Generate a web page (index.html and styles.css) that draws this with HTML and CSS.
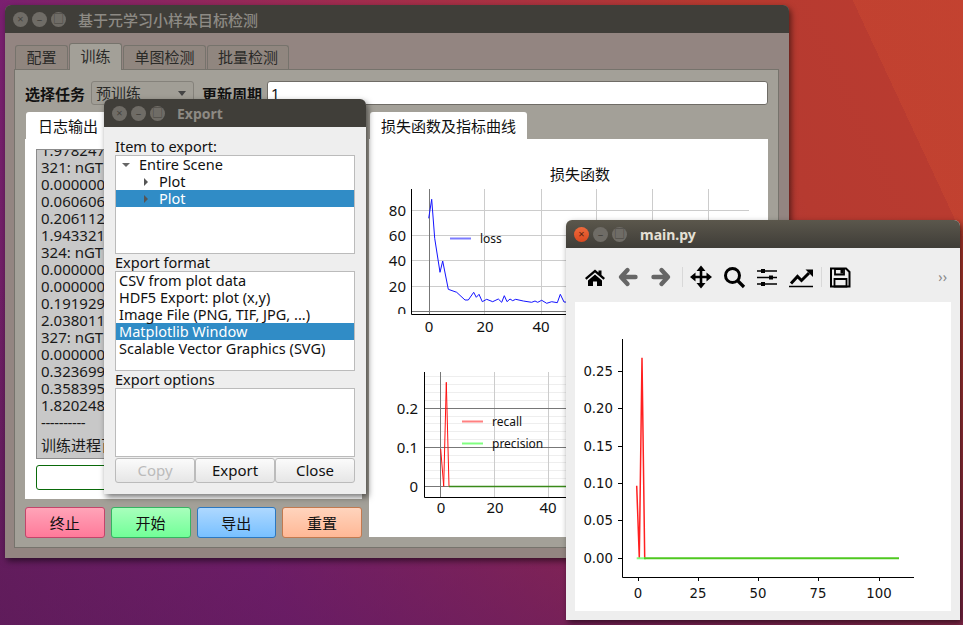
FILE: index.html
```html
<!DOCTYPE html>
<html>
<head>
	<meta charset="utf-8">
	<title>基于元学习小样本目标检测</title>
	<link rel="stylesheet" href="styles.css">
</head>
<body>
	<div class="window win-main">
		<div class="titlebar">
			<span class="wbtn">×</span><span class="wbtn">–</span><span class="wbtn">□</span>
			<span class="wtitle">基于元学习小样本目标检测</span>
		</div>
		<div class="main-body">
			<div class="tabs">
				<span class="tab tab-1">配置</span>
				<span class="tab tab-2 active">训练</span>
				<span class="tab tab-3">单图检测</span>
				<span class="tab tab-4">批量检测</span>
			</div>
			<div class="pane">
				<div class="top-row">
					<b class="lbl">选择任务</b>
					<div class="combo">预训练<i class="combo-arrow"></i></div>
					<b class="lbl lbl-2">更新周期</b>
					<div class="lineedit">1</div>
				</div>
				<div class="columns">
					<div class="col-left">
						<div class="subtab">日志输出</div>
						<div class="log-pane">
							<div class="log">
								<div>1.978247</div>
								<div>321: nGT</div>
								<div>0.000000</div>
								<div>0.060606</div>
								<div>0.206112</div>
								<div>1.943321</div>
								<div>324: nGT</div>
								<div>0.000000</div>
								<div>0.000000</div>
								<div>0.191929</div>
								<div>2.038011</div>
								<div>327: nGT</div>
								<div>0.000000</div>
								<div>0.323699</div>
								<div>0.358395</div>
								<div>1.820248</div>
								<div class="log-dash">----------</div>
								<div class="log-last">训练进程百分比</div>
							</div>
							<div class="progress"></div>
						</div>
						<div class="actions">
							<button class="act act-stop">终止</button>
							<button class="act act-start">开始</button>
							<button class="act act-export">导出</button>
							<button class="act act-reset">重置</button>
						</div>
					</div>
					<div class="col-right">
						<div class="subtab subtab-wide">损失函数及指标曲线</div>
						<div class="chart-pane">
							<svg class="charts" width="399" height="397" viewBox="369 139 399 397">
								<defs>
									<clipPath id="clip1"><rect x="380" y="185" width="380" height="129"/></clipPath>
								</defs>
								<text class="cjk" x="580" y="180" text-anchor="middle">损失函数</text>
								<g stroke="#ccc" stroke-width="1">
									<path d="M412 210.5H749M412 235.5H749M412 260.5H749M412 286.5H749"/>
									<path d="M484.5 189V314M541.5 189V314M596.5 189V314M652.5 189V314M708.5 189V314"/>
								</g>
								<path d="M412 311.5H749M429.5 189V314" stroke="#777" fill="none"/>
								<path d="M411.5 189V314.5H749" stroke="#000" fill="none" stroke-width="1"/>
								<polyline fill="none" stroke="#1414ff" stroke-width="1" points="428.7,218.3 431.7,199.3 434.7,238.3 440,272.3 442.7,261 448.3,289.3 456.7,292.3 465,300 468.3,300 473.7,292.3 476.3,297.3 479,294.3 482.3,301.7 486.7,299.3 492.7,301.7 498.3,299 501.7,302.3 504.3,295.7 507,301.7 510,299 512.7,300.7 515.7,299.3 523.3,301 531.7,302.3 535,301 537.7,302.3 541.7,300.3 546.7,303.3 551.7,301.7 557.3,302.7 560.3,294.3 564,302 590,303 620,302 680,303 745,302"/>
								<path d="M450 238.5H471" stroke="#7c7cff" stroke-width="2"/>
								<text class="legend" x="480" y="243">loss</text>
								<g class="tick" text-anchor="end" clip-path="url(#clip1)">
									<text x="406" y="216">80</text>
									<text x="406" y="241">60</text>
									<text x="406" y="266">40</text>
									<text x="406" y="292">20</text>
									<text x="406" y="317">0</text>
								</g>
								<g class="tick" text-anchor="middle">
									<text x="429" y="332">0</text>
									<text x="485" y="332">20</text>
									<text x="541" y="332">40</text>
								</g>

								<g stroke="#eee">
									<path d="M425 376.500H566M425 384.500H566M425 392.500H566M425 400.500H566M425 416.500H566M425 423.500H566M425 431.500H566M425 439.500H566M425 455.500H566M425 462.500H566M425 470.500H566M425 478.500H566"/>
								</g>
								<path d="M494.500 372V497M548.500 372V497" stroke="#ccc"/>
								<path d="M425 408.500H566M425 447.500H566M425 486.500H566M440.500 372V497" stroke="#777" fill="none"/>
								<path d="M424.500 372V497.500H566" stroke="#000" fill="none"/>
								<polyline fill="none" stroke="#ff1010" points="440.700,449 443.700,486.300 446.300,382.300 449,486.300"/>
								<path d="M449 486.500H566" stroke="#3a8a1a" stroke-width="1.500"/>
								<path d="M462 421.500H483" stroke="#ff8080" stroke-width="2"/>
								<path d="M462 443.500H483" stroke="#80ff80" stroke-width="2"/>
								<text class="legend" x="492" y="426">recall</text>
								<text class="legend" x="492" y="448">precision</text>
								<g class="tick" text-anchor="end">
									<text x="418" y="414">0.2</text>
									<text x="418" y="453">0.1</text>
									<text x="418" y="492">0</text>
								</g>
								<g class="tick" text-anchor="middle">
									<text x="441" y="513">0</text>
									<text x="495" y="513">20</text>
									<text x="548" y="513">40</text>
								</g>
							</svg>
						</div>
					</div>
				</div>
			</div>
		</div>
	</div>

	<div class="window win-export">
		<div class="titlebar">
			<span class="wbtn">×</span><span class="wbtn">–</span><span class="wbtn">□</span>
			<span class="wtitle wtitle-bold">Export</span>
		</div>
		<div class="export-body">
			<div class="exp-label">Item to export:</div>
			<div class="box box-tree">
				<div class="row row-top"><i class="tri-down"></i>Entire Scene</div>
				<div class="row row-child"><i class="tri-right"></i>Plot</div>
				<div class="row row-child selected"><i class="tri-right"></i>Plot</div>
			</div>
			<div class="exp-label">Export format</div>
			<div class="box box-list">
				<div class="row">CSV from plot data</div>
				<div class="row">HDF5 Export: plot (x,y)</div>
				<div class="row">Image File (PNG, TIF, JPG, ...)</div>
				<div class="row selected">Matplotlib Window</div>
				<div class="row">Scalable Vector Graphics (SVG)</div>
			</div>
			<div class="exp-label">Export options</div>
			<div class="box box-options"></div>
			<div class="exp-buttons">
				<button class="exp-btn" disabled>Copy</button>
				<button class="exp-btn">Export</button>
				<button class="exp-btn">Close</button>
			</div>
		</div>
	</div>

	<div class="window win-plot">
		<div class="titlebar titlebar-focus">
			<span class="wbtn wbtn-close">×</span><span class="wbtn">–</span><span class="wbtn">□</span>
			<span class="wtitle wtitle-focus">main.py</span>
		</div>
		<div class="toolbar">
			<svg class="ico" width="24" height="24" viewBox="0 0 24 24"><path d="M12 4.500L2 13l1.500 1.700L12 7.500l8.500 7.200L22 13l-3.500-3V5.500h-3v2z"/><path d="M5 15.500L12 9.500l7 6V21h-5v-4.500h-4V21H5z"/></svg>
			<svg class="ico" width="24" height="24" viewBox="0 0 24 24"><path d="M19.500 12H6M11.500 5L5 12l6.500 7" fill="none" stroke="#666" stroke-width="4.400" stroke-linecap="round" stroke-linejoin="round"/></svg>
			<svg class="ico" width="24" height="24" viewBox="0 0 24 24"><path d="M4.500 12H18M12.500 5L19 12l-6.500 7" fill="none" stroke="#666" stroke-width="4.400" stroke-linecap="round" stroke-linejoin="round"/></svg>
			<span class="sep"></span>
			<svg class="ico" width="24" height="24" viewBox="0 0 24 24"><path d="M12 4V20M4 12H20" stroke="#000" stroke-width="2.600"/><path d="M12 0.500L16.500 6h-9zM12 23.500L7.500 18h9zM1 12L6.500 7.500v9zM23 12L17.500 16.500v-9z"/></svg>
			<svg class="ico" width="24" height="24" viewBox="0 0 24 24"><circle cx="10.500" cy="10.500" r="7" fill="none" stroke="#000" stroke-width="3"/><path d="M15.500 15.500L22 22" stroke="#000" stroke-width="3.200"/></svg>
			<svg class="ico" width="24" height="24" viewBox="0 0 24 24"><path d="M2 6H22M2 12.500H22M2 19H22" stroke="#000" stroke-width="1.500"/><path d="M6 4h4v4H6zM14 10.500h4v4h-4zM6 17h4v4H6z"/></svg>
			<svg class="ico" width="26" height="24" viewBox="0 0 26 24"><path d="M1 21.500H25" stroke="#000" stroke-width="1.500"/><path d="M3 18.500L9.500 11.500l4 4L21 8" fill="none" stroke="#000" stroke-width="3"/><path d="M17.500 4.500H25V12z"/></svg>
			<span class="sep sep-2"></span>
			<svg class="ico" width="24" height="24" viewBox="0 0 24 24"><path d="M3 3.500H18L21.500 7V21.500H3z" fill="none" stroke="#000" stroke-width="2"/><path d="M7 4h9v5.500H7zM6.500 14h12v7.500h-12z" fill="none" stroke="#000" stroke-width="1.800"/><path d="M12.500 5h2.500v3.500h-2.500z"/></svg>
			<span class="more">››</span>
		</div>
		<div class="canvas">
			<svg width="376" height="309" viewBox="575 302 376 309">
				<path d="M622.500 339V577.500H914" fill="none" stroke="#000" stroke-width="1"/>
				<path d="M638.500 577V581M698.500 577V581M758.500 577V581M818.500 577V581M879.500 577V581M622 371.500H618M622 408.500H618M622 446.500H618M622 483.500H618M622 520.500H618M622 558.500H618" stroke="#000"/>
				<polyline fill="none" stroke="#ff2020" stroke-width="1.500" points="636.700,485.700 639.300,558 642,357.700 644.700,558"/>
				<path d="M636.700 558.300H646" stroke="#80ff80" stroke-width="2"/>
				<path d="M644 558.300H899" stroke="#4fc820" stroke-width="2"/>
				<g class="mpl" text-anchor="end">
					<text x="613" y="376">0.25</text>
					<text x="613" y="413">0.20</text>
					<text x="613" y="451">0.15</text>
					<text x="613" y="488">0.10</text>
					<text x="613" y="525">0.05</text>
					<text x="613" y="563">0.00</text>
				</g>
				<g class="mpl" text-anchor="middle">
					<text x="638" y="598">0</text>
					<text x="698" y="598">25</text>
					<text x="758" y="598">50</text>
					<text x="818" y="598">75</text>
					<text x="879" y="598">100</text>
				</g>
			</svg>
		</div>
	</div>
</body>
</html>
```

FILE: styles.css
```css
* {
	box-sizing: border-box;
	font-family: "Noto Sans", "Noto Sans CJK SC", sans-serif;
}

html, body {
	margin: 0;
	padding: 0;
	height: 100%;
	overflow: hidden;
}

body {
	font-size: 15px;
	color: #111;
	background:
		linear-gradient(65deg, transparent 91.2%, rgba(255, 110, 50, .12) 91.2%),
		linear-gradient(to bottom, transparent 45%, rgba(90, 25, 90, .55) 100%),
		linear-gradient(65deg, #661f5c 0%, #7a2070 23%, #a02c50 50%, #b63a30 80%, #bb3c30 100%);
}

/* windows on the desktop */
.window {
	position: absolute;
	display: flex;
	flex-direction: column;
	border-radius: 6px 6px 0 0;
	box-shadow: 2px 3px 6px rgba(0, 0, 0, .55);
}

.win-main {
	left: 5px;
	top: 5px;
	width: 784px;
	height: 553px;
	background-color: #938581;
}

.win-export {
	left: 104px;
	top: 99px;
	width: 262px;
	height: 395px;
	background-color: #eee;
}

.win-plot {
	left: 566px;
	top: 220px;
	width: 394px;
	height: 400px;
	background-color: #eee;
}

.titlebar {
	display: flex;
	align-items: center;
	height: 28px;
	flex-shrink: 0;
	padding-left: 8px;
	gap: 4px;
	background-color: #403e39;
	border-radius: 6px 6px 0 0;
}

.titlebar-focus {
	background: linear-gradient(#5b574c, #3f3d38);
}

.wbtn {
	width: 15px;
	height: 15px;
	border-radius: 50%;
	background-color: #6f6c66;
	color: #45433e;
	font-size: 11px;
	line-height: 14px;
	text-align: center;
}

.wbtn-close {
	background: linear-gradient(#ee6a3c, #d9481f);
	color: #5a2310;
}

.wtitle {
	margin-left: 8px;
	color: #8d8a84;
	font-weight: 500;
}

.wtitle-bold {
	font-weight: 700;
	font-size: 14px;
}

.wtitle-focus {
	margin-left: 9px;
	color: #e4e0d6;
	font-weight: 700;
	font-size: 14px;
}

/* main window */
.main-body {
	flex: 1;
	display: flex;
	flex-direction: column;
	padding: 10px 10px 10px 9px;
}

.tabs {
	display: flex;
	align-items: flex-end;
	height: 26px;
	padding-left: 1px;
}

.tab {
	height: 24px;
	line-height: 22px;
	text-align: center;
	background-color: #90867f;
	border: 1px solid #76736c;
	border-bottom: none;
	border-radius: 3px 3px 0 0;
	margin-right: 1px;
	color: #2a2a28;
}

.tab-1 { width: 53px; }
.tab-2 { width: 53px; }
.tab-3 { width: 83px; }
.tab-4 { width: 82px; }

.tab.active {
	height: 27px;
	background-color: #a3a098;
	position: relative;
	top: 1px;
	line-height: 24px;
}

.pane {
	flex: 1;
	display: flex;
	flex-direction: column;
	padding: 11px 10px 8px 10px;
	background-color: #a3a098;
	border: 1px solid #76736c;
}

.top-row {
	display: flex;
	align-items: center;
	height: 24px;
	flex-shrink: 0;
}

.lbl {
	width: 66px;
	font-weight: 700;
}

.lbl-2 {
	margin-left: 8px;
	width: 65px;
}

.combo {
	position: relative;
	width: 103px;
	height: 24px;
	line-height: 23px;
	padding-left: 4px;
	background-color: #a19e96;
	border: 1px solid #85827b;
	border-radius: 3px;
	color: #2a2a28;
}

.combo-arrow {
	position: absolute;
	right: 7px;
	top: 9px;
	border-left: 4px solid transparent;
	border-right: 4px solid transparent;
	border-top: 5px solid #444;
}

.lineedit {
	flex: 1;
	height: 24px;
	line-height: 23px;
	padding-left: 3px;
	background-color: #fff;
	border: 1px solid #6f6c66;
	border-radius: 3px;
}

.columns {
	flex: 1;
	min-height: 0;
	display: flex;
	gap: 7px;
	margin-top: 7px;
}

.col-left {
	width: 337px;
	flex-shrink: 0;
	display: flex;
	flex-direction: column;
}

.col-right {
	flex: 1;
	min-width: 0;
	display: flex;
	flex-direction: column;
	margin-bottom: 2px;
}

.subtab {
	width: 84px;
	height: 27px;
	line-height: 28px;
	margin-left: 1px;
	text-align: center;
	background-color: #fff;
	border-radius: 3px 3px 0 0;
}

.subtab-wide {
	width: 157px;
}

.log-pane {
	height: 360px;
	padding: 10px 11px 9px 11px;
	background-color: #fff;
	display: flex;
	flex-direction: column;
	gap: 6px;
}

.log {
	flex: 1;
	min-height: 0;
	overflow: hidden;
	display: flex;
	flex-direction: column;
	justify-content: flex-end;
	padding: 0 0 3px 4px;
	line-height: 17px;
	white-space: nowrap;
	color: #1a1a1a;
	background-color: #c8c8c8;
	border: 1px solid #8b8b8b;
}

.log-dash {
	letter-spacing: -.4px;
}

.log-last {
	margin-top: 4px;
	line-height: 20px;
}

.progress {
	height: 25px;
	background-color: #fff;
	border: 1px solid #0a6a0a;
	border-radius: 3px;
}

.actions {
	display: flex;
	gap: 6px;
	margin-top: 8px;
}

.act {
	flex: 1;
	height: 31px;
	font-size: 15px;
	padding: 0;
	border-radius: 3px;
	border: 1px solid;
	color: #111;
}

.act-stop { background: linear-gradient(#ffa4b8, #ff7a9a); border-color: #c3456b; }
.act-start { background: linear-gradient(#a8ffbc, #72ff98); border-color: #35b462; }
.act-export { background: linear-gradient(#aed8ff, #78c0ff); border-color: #2c78c0; }
.act-reset { background: linear-gradient(#ffd4bd, #ffb896); border-color: #c27a50; }

.chart-pane {
	flex: 1;
	min-height: 0;
	overflow: hidden;
	background-color: #fff;
}

.charts {
	display: block;
}

.charts text {
	fill: #111;
	font-size: 15px;
}

.charts .legend {
	font-size: 12px;
}

/* export dialog */
.export-body {
	flex: 1;
	display: flex;
	flex-direction: column;
	padding: 11px 11px 10px 11px;
	font-size: 14.500px;
}

.exp-label {
	height: 17px;
	line-height: 16px;
}

.box {
	background-color: #fff;
	border: 1px solid #bbb;
}

.box-tree { height: 99px; }
.box-list { height: 100px; }
.box-options { height: 69px; }

.row {
	height: 17px;
	line-height: 17px;
	padding-left: 3px;
	white-space: nowrap;
}

.row.selected {
	background-color: #308cc6;
	color: #fff;
}

.row-top {
	display: flex;
	align-items: center;
	padding-left: 6px;
}

.row-child {
	display: flex;
	align-items: center;
	padding-left: 28px;
}

.tri-down {
	width: 0;
	margin-right: 9px;
	border-left: 4px solid transparent;
	border-right: 4px solid transparent;
	border-top: 4px solid #666;
}

.tri-right {
	width: 0;
	margin-right: 11px;
	border-top: 4px solid transparent;
	border-bottom: 4px solid transparent;
	border-left: 4px solid #555;
}

.exp-buttons {
	display: flex;
	margin-top: 1px;
}

.exp-btn {
	flex: 1;
	height: 25px;
	padding: 0 0 2px;
	font-size: 15px;
	color: #111;
	background: linear-gradient(#fbfbfb, #e6e6e6);
	border: 1px solid #bbb;
	border-radius: 3px;
}

.exp-btn:disabled {
	color: #bbb;
}

/* matplotlib window */
.toolbar {
	display: flex;
	align-items: center;
	height: 54px;
	flex-shrink: 0;
	padding: 3px 13px 0 17px;
	gap: 9px;
}

.ico {
	flex-shrink: 0;
}

.sep {
	width: 1px;
	height: 20px;
	background-color: #d8d8d8;
	margin-right: -3px;
}

.sep-2 {
	margin-left: -2px;
}

.more {
	margin-left: auto;
	color: #888;
	font-size: 14px;
}

.canvas {
	height: 309px;
	margin: 0 9px;
	background-color: #fff;
}

.canvas svg {
	display: block;
}

.mpl text {
	fill: #111;
	font-family: "DejaVu Sans", sans-serif;
	font-size: 13.300px;
}
```
